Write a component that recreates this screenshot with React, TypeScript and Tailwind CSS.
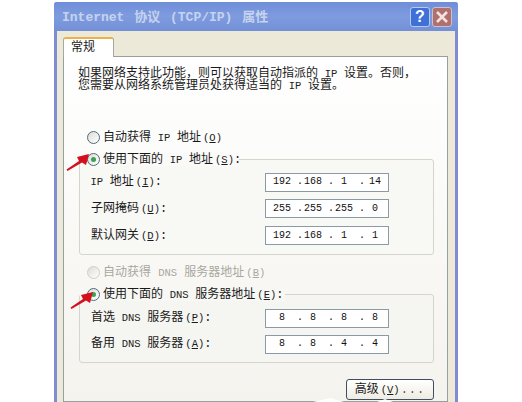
const mono = "font-['Liberation_Mono','Noto_Sans_CJK_SC',monospace]";

function L({ children }: { children: React.ReactNode }) {
  return <span className="mx-[-0.5px] text-[10.5px] text-[#222]">{children}</span>;
}

function Radio({ checked, disabled }: { checked?: boolean; disabled?: boolean }) {
  return (
    <span
      className={`flex h-[13px] w-[13px] shrink-0 items-center justify-center rounded-full border bg-gradient-to-br from-[#dcdcd6] to-white ${
        disabled ? "border-[#cfcfc8]" : "border-[#4f6a80]"
      }`}
    >
      {checked && <span className="h-[5px] w-[5px] rounded-full bg-[#3f9f56]" />}
    </span>
  );
}

function IpInput({ parts }: { parts: string[] }) {
  return (
    <div className="flex h-[19px] w-[124px] shrink-0 items-center border border-[#8a9ba8] bg-white pl-[2px] text-[10px] text-[#111]">
      {parts.map((p, i) => (
        <div key={i} className="flex">
          <span className="w-[28px] text-center">{p}</span>
          {i < 3 && <span className="w-[3px] translate-x-[1px] text-center">.</span>}
        </div>
      ))}
    </div>
  );
}

function Row({ label, parts, h }: { label: React.ReactNode; parts: string[]; h: string }) {
  return (
    <div className={`flex items-center justify-between pr-[44px] pl-[11px] ${h}`}>
      <span>{label}</span>
      <IpInput parts={parts} />
    </div>
  );
}

function Key({ k }: { k: string }) {
  return (
    <span className="ml-[2px] text-[10.5px]">
      {"("}
      <span className="underline">{k}</span>
      {")"}
    </span>
  );
}

function Arrow({ className }: { className: string }) {
  return (
    <svg className={`absolute ${className}`} width="26" height="20" viewBox="0 0 26 20">
      <path d="M1.5 17.5 L14 9 L12 5 L24 2 L21 13 L17 10.5 L2.5 19 Z" fill="#d3101c" />
    </svg>
  );
}

export default function App() {
  return (
    <div className={`relative h-[402px] w-[522px] overflow-hidden bg-white pt-[2px] pl-[54px] text-[12px] leading-[12px] text-[#1a1a1a] ${mono}`}>
      <div className="flex h-[400px] w-[404px] flex-col overflow-hidden rounded-t-[3px] bg-[#7f8cd0]">
        <div className="flex h-[29px] shrink-0 items-center justify-between bg-gradient-to-b from-[#6f8ed8] via-[#7f9be0] to-[#7390d6] pr-[6px] pl-[8px]">
          <span className="pt-[2px] text-[13px] font-bold text-[#c5d3ee] [word-spacing:2px]">Internet 协议 (TCP/IP) 属性</span>
          <div className="flex gap-[2px]">
            <div className="flex h-[20px] w-[20px] items-center justify-center rounded-[3px] border border-[#b9c9ee] bg-[#3d70d8] font-['Liberation_Sans',sans-serif] text-[16px] font-bold text-white">
              ?
            </div>
            <div className="flex h-[20px] w-[20px] items-center justify-center rounded-[3px] border border-[#c9c0d0] bg-[#b0706e] text-white">
              <svg width="14" height="14" viewBox="0 0 14 14">
                <path d="M2 2 L12 12 M12 2 L2 12" stroke="#f3e3e0" strokeWidth="2.6" />
              </svg>
            </div>
          </div>
        </div>

        <div className="mx-[3px] flex flex-1 flex-col bg-[#ece9d8] pt-[6px] pr-[7px] pl-[6px]">
          <div className="relative z-10 -mb-px flex h-[20px] w-[51px] items-start rounded-t-[3px] border-x border-[#a5a99f] border-t-[2px] border-t-[#eeb04a] bg-white pt-[3px] pl-[7px]">
            常规
          </div>
          <div className="flex-1 border border-[#97a0a0] bg-gradient-to-b from-white to-[#f4f3ee] pt-[11px] pl-[14px]">
            <p className="h-[24px] whitespace-nowrap">
              如果网络支持此功能，则可以获取自动指派的 <L>IP</L> 设置。否则，
              <br />
              您需要从网络系统管理员处获得适当的 <L>IP</L> 设置。
            </p>

            <div className="mt-[39px] flex h-[13px] items-center gap-[3px] pl-[9px]">
              <Radio />
              <span>自动获得 <L>IP</L> 地址<Key k="O" /></span>
            </div>

            <div className="mt-[15px] mr-[13px] ml-[1px] h-[96px] rounded-[3px] border border-[#d6d5cc] bg-[#f8f8f5]">
              <div className="-mt-[7px] mb-[3px] flex h-[13px] w-[159px] items-center gap-[3px] bg-[#fafaf8] pl-[7px]">
                <Radio checked />
                <span className="whitespace-nowrap">使用下面的 <L>IP</L> 地址<Key k="S" />:</span>
              </div>
              <Row h="h-[26px]" label={<><L>IP</L> 地址<Key k="I" />:</>} parts={["192", "168", "1", "14"]} />
              <Row h="h-[27px]" label={<>子网掩码<Key k="U" />:</>} parts={["255", "255", "255", "0"]} />
              <Row h="h-[27px]" label={<>默认网关<Key k="D" />:</>} parts={["192", "168", "1", "1"]} />
            </div>

            <div className="mt-[11px] flex h-[13px] items-center gap-[3px] pl-[9px] text-[#a9a89f]">
              <Radio disabled />
              <span>自动获得 <span className="text-[10.5px]">DNS</span> 服务器地址<Key k="B" /></span>
            </div>

            <div className="mt-[15px] mr-[13px] ml-[1px] h-[69px] rounded-[3px] border border-[#d6d5cc] bg-[#f5f5f1]">
              <div className="-mt-[7px] mb-[4px] flex h-[13px] w-[205px] items-center gap-[3px] bg-[#f7f7f3] pl-[7px]">
                <Radio checked />
                <span className="whitespace-nowrap">使用下面的 <L>DNS</L> 服务器地址<Key k="E" />:</span>
              </div>
              <Row h="h-[26px]" label={<>首选 <L>DNS</L> 服务器<Key k="P" />:</>} parts={["8", "8", "8", "8"]} />
              <Row h="h-[26px]" label={<>备用 <L>DNS</L> 服务器<Key k="A" />:</>} parts={["8", "8", "4", "4"]} />
            </div>

            <div className="mt-[16px] mr-[13px] flex justify-end">
              <button className="flex h-[21px] w-[88px] items-center justify-center rounded-[3px] border border-[#3f4f60] bg-gradient-to-b from-white to-[#eeece2] text-[12px] leading-[12px] text-[#1a1a1a]">
                高级<Key k="V" /><span className="ml-[1px] tracking-[1px] text-[#555]">...</span>
              </button>
            </div>
          </div>
        </div>
      </div>
      <Arrow className="top-[152px] left-[65px]" />
      <Arrow className="top-[290px] left-[69px]" />
      <svg className="absolute top-[397px] left-[310px]" width="90" height="5" viewBox="0 0 90 5">
        <path d="M3 5 L20 1 L34 5 Z M67 5 L75 2 L83 5 Z" fill="#ffffff" />
      </svg>
    </div>
  );
}
